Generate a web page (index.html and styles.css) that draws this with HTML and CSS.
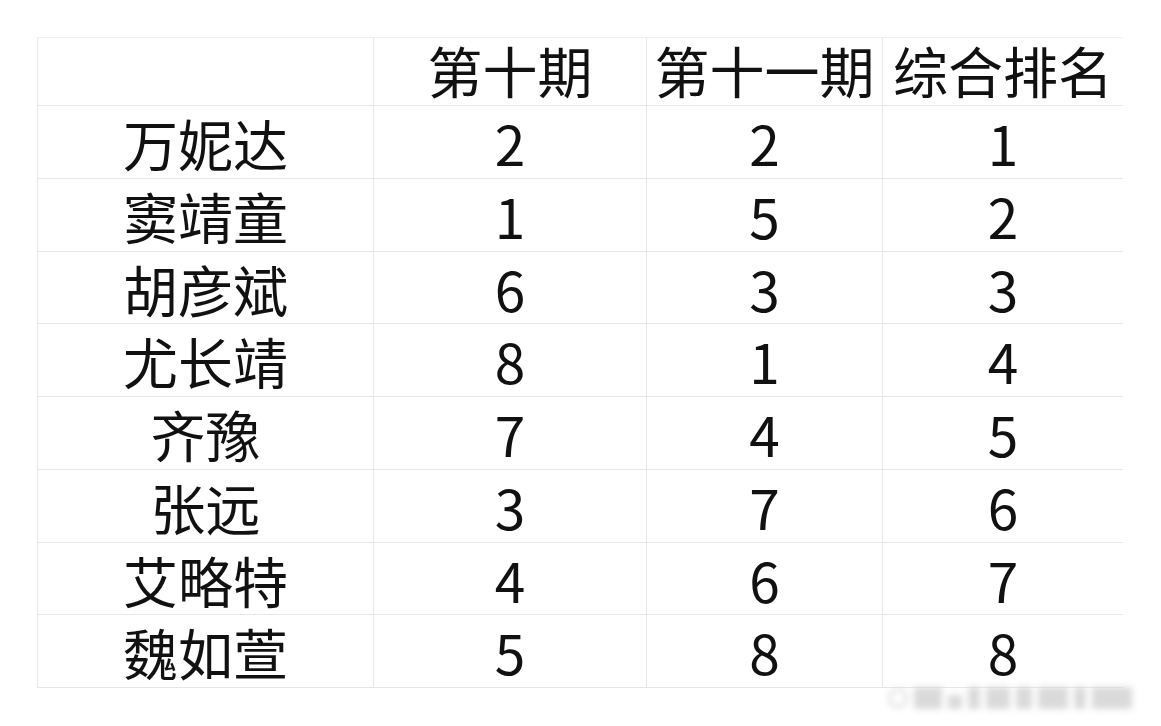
FILE: index.html
```html
<!DOCTYPE html>
<html lang="zh">
<head>
<meta charset="utf-8">
<link rel="stylesheet" href="styles.css">
</head>
<body>
<div class="page">
  <div class="sheet">
    <div class="cell head"></div><div class="cell head">第十期</div><div class="cell head">第十一期</div><div class="cell head">综合排名</div>
    <div class="cell">万妮达</div><div class="cell">2</div><div class="cell">2</div><div class="cell">1</div>
    <div class="cell">窦靖童</div><div class="cell">1</div><div class="cell">5</div><div class="cell">2</div>
    <div class="cell">胡彦斌</div><div class="cell">6</div><div class="cell">3</div><div class="cell">3</div>
    <div class="cell">尤长靖</div><div class="cell">8</div><div class="cell">1</div><div class="cell">4</div>
    <div class="cell">齐豫</div><div class="cell">7</div><div class="cell">4</div><div class="cell">5</div>
    <div class="cell">张远</div><div class="cell">3</div><div class="cell">7</div><div class="cell">6</div>
    <div class="cell">艾略特</div><div class="cell">4</div><div class="cell">6</div><div class="cell">7</div>
    <div class="cell">魏如萱</div><div class="cell">5</div><div class="cell">8</div><div class="cell">8</div>
  </div>
  <div class="watermark">
    <span class="wm-ring"></span><span class="wm-b w1"></span><span class="wm-b w2"></span><span class="wm-b w3"></span><span class="wm-b w4"></span><span class="wm-b w5"></span><span class="wm-b w6"></span><span class="wm-b w7"></span><span class="wm-b w8"></span>
  </div>
</div>
</body>
</html>
```

FILE: styles.css
```css
html, body {
  margin: 0;
  padding: 0;
  background: #ffffff;
}
.page {
  position: relative;
  width: 1161px;
  height: 726px;
  padding: 37px 0 0 37px;
  box-sizing: border-box;
  overflow: hidden;
}
.sheet {
  display: grid;
  width: 1086px;
  grid-template-columns: 336px 273px 236px 241px;
  grid-template-rows: 68px repeat(8, 72.75px);
  border-top: 1px solid #f0f0f0;
  font-family: "Noto Sans CJK SC", "Noto Sans", sans-serif;
  font-size: 55px;
  color: #111111;
}
.cell {
  display: flex;
  align-items: center;
  justify-content: center;
  border-left: 1px solid #e6e6e6;
  border-bottom: 1px solid #e6e6e6;
  line-height: 1.1;
  padding-top: 1px;
  box-sizing: border-box;
  white-space: nowrap;
}
.head {
  padding-top: 0;
  padding-bottom: 5px;
}
.watermark {
  position: absolute;
  left: 888px;
  top: 680px;
  width: 262px;
  height: 36px;
  display: flex;
  align-items: center;
  gap: 6px;
  filter: blur(3px);
  opacity: 0.85;
}
.wm-ring {
  width: 20px;
  height: 20px;
  border-radius: 50%;
  border: 3px solid #d8d8d8;
  box-sizing: border-box;
}
.wm-b {
  display: block;
  background: #d4d4d4;
  height: 22px;
}
.w1 { width: 28px; }
.w2 { width: 14px; height: 14px; margin-top: 8px; }
.w3 { width: 12px; }
.w4 { width: 24px; }
.w5 { width: 16px; }
.w6 { width: 30px; }
.w7 { width: 12px; }
.w8 { width: 40px; }
```
